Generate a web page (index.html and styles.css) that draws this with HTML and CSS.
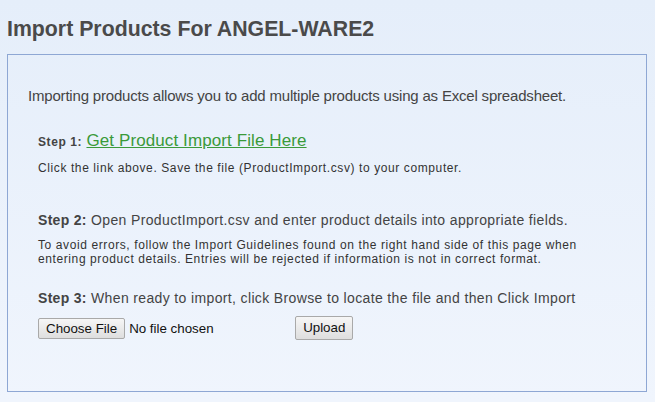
FILE: index.html
```html
<!DOCTYPE html>
<html>
<head>
<meta charset="utf-8">
<link rel="stylesheet" href="styles.css">
</head>
<body>
<h1 class="title">Import Products For ANGEL-WARE2</h1>
<div class="panel">
  <p class="intro">Importing products allows you to add multiple products using as Excel spreadsheet.</p>
  <div class="step step1">
    <p class="step-head"><b>Step 1:</b> <a class="dl-link" href="#">Get Product Import File Here</a></p>
    <p class="note">Click the link above. Save the file (ProductImport.csv) to your computer.</p>
  </div>
  <div class="step step2">
    <p class="step-head"><b>Step 2:</b> Open ProductImport.csv and enter product details into appropriate fields.</p>
    <p class="note">To avoid errors, follow the Import Guidelines found on the right hand side of this page when entering product details. Entries will be rejected if information is not in correct format.</p>
  </div>
  <div class="step step3">
    <p class="step-head"><b>Step 3:</b> When ready to import, click Browse to locate the file and then Click Import</p>
    <div class="upload-row">
      <span class="file-btn">Choose File</span><span class="file-name">No file chosen</span>
      <span class="upload-btn">Upload</span>
    </div>
  </div>
</div>
</body>
</html>
```
FILE: styles.css
```css
html, body {
  margin: 0;
  height: 100%;
}
body {
  background: linear-gradient(to bottom, #e5eefa 0%, #f0f5fd 100%);
  font-family: "Liberation Sans", Arial, sans-serif;
  color: #444;
  padding: 0 8px 0 7px;
  box-sizing: border-box;
}
.title {
  margin: 0;
  padding-top: 18px;
  font-size: 21.3px;
  line-height: 23px;
  font-weight: bold;
  color: #4a4a4a;
}
.panel {
  margin-top: 13px;
  border: 1px solid #8ea7d4;
  height: 338px;
  box-sizing: border-box;
  padding: 32px 20px 0 20px;
}
.intro {
  margin: 0;
  font-size: 15px;
  line-height: 17px;
  color: #444;
  letter-spacing: -0.19px;
}
.step {
  margin-left: 10px;
}
.step p { margin: 0; }
.step1 { margin-top: 27px; }
.step-head {
  font-size: 14px;
  line-height: 16px;
  color: #444;
  letter-spacing: 0.36px;
}
.step-head b {
  font-size: 12px;
  color: #444;
  letter-spacing: 0.6px;
}
.step1 .step-head { line-height: 19px; }
.dl-link {
  font-size: 17px;
  color: #3a9a3a;
  text-decoration: underline;
  letter-spacing: 0.1px;
}
.note {
  font-size: 12px;
  line-height: 14px;
  color: #333;
  letter-spacing: 0.6px;
}
.step1 .note { margin-top: 9px; }
.step2 { margin-top: 37px; }
.step2 .note { margin-top: 10px; }
.step2 .step-head b, .step3 .step-head b { font-size: 14px; letter-spacing: 0.3px; }
.step3 { margin-top: 24px; }
.upload-row {
  display: flex;
  align-items: center;
  margin-top: 10px;
  font-size: 13.33px;
}
.file-btn {
  border: 1px solid #a9a9a9;
  background: linear-gradient(#f6f6f6, #dedede);
  border-radius: 2px;
  padding: 0 7px;
  height: 19px;
  line-height: 19px;
  color: #111;
}
.file-name {
  margin-left: 4px;
  color: #111;
  width: 166px;
}
.upload-btn {
  border: 1px solid #a9a9a9;
  background: linear-gradient(#f6f6f6, #dedede);
  border-radius: 2px;
  padding: 0 7px;
  height: 22px;
  line-height: 22px;
  color: #111;
}
```
